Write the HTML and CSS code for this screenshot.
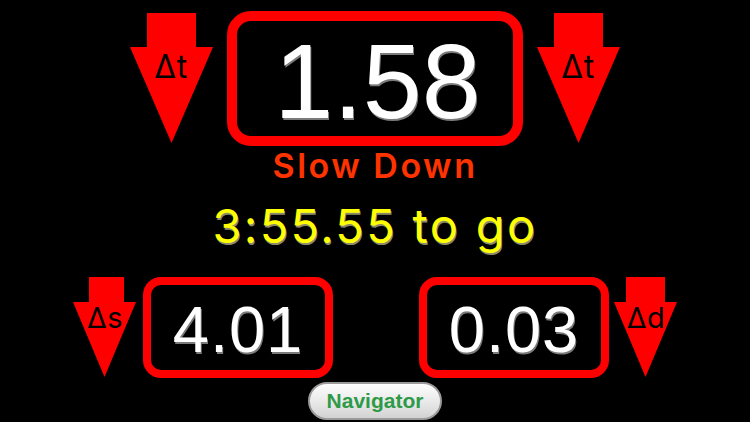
FILE: index.html
```html
<!DOCTYPE html>
<html>
<head>
<meta charset="utf-8">
<link rel="stylesheet" href="styles.css">
</head>
<body>
<div class="screen">
  <div class="top-row">
    <svg class="arrow-big" viewBox="0 0 83 130" width="83" height="130">
      <polygon points="17,0 66,0 66,34 83,34 41.5,130 0,34 17,34" fill="#ff0000"/>
      <text x="41" y="65" class="arrow-label-big">Δt</text>
    </svg>
    <div class="box-big"><span class="num-big">1.58</span></div>
    <svg class="arrow-big" viewBox="0 0 83 130" width="83" height="130">
      <polygon points="17,0 66,0 66,34 83,34 41.5,130 0,34 17,34" fill="#ff0000"/>
      <text x="41" y="65" class="arrow-label-big">Δt</text>
    </svg>
  </div>
  <div class="status">Slow Down</div>
  <div class="togo">3:55.55 to go</div>
  <div class="bottom-row">
    <div class="group group-left">
      <svg class="arrow-small" viewBox="0 0 63 100" width="63" height="100">
        <polygon points="16,0 51,0 51,25 63,25 31.5,100 0,25 16,25" fill="#ff0000"/>
        <text x="32" y="51" class="arrow-label-small">Δs</text>
      </svg>
      <div class="box-small"><span class="num-small">4.01</span></div>
    </div>
    <div class="group group-right">
      <div class="box-small"><span class="num-small">0.03</span></div>
      <svg class="arrow-small" viewBox="0 0 63 100" width="63" height="100">
        <polygon points="12,0 51,0 51,25 63,25 31.5,100 0,25 12,25" fill="#ff0000"/>
        <text x="32" y="51" class="arrow-label-small">Δd</text>
      </svg>
    </div>
  </div>
  <div class="nav-row">
    <div class="nav-btn">Navigator</div>
  </div>
</div>
</body>
</html>
```
FILE: styles.css
```css
html, body {
  margin: 0;
  padding: 0;
  background: #000;
  width: 750px;
  height: 422px;
  overflow: hidden;
}
.screen {
  width: 750px;
  height: 422px;
  display: flex;
  flex-direction: column;
  font-family: "Liberation Sans", Arial, sans-serif;
}
.top-row {
  display: flex;
  justify-content: center;
  align-items: flex-start;
  gap: 14px;
  padding-top: 11px;
}
.arrow-big {
  display: block;
  margin-top: 2px;
}
.arrow-label-big {
  font-family: Inter, "Liberation Sans", sans-serif;
  font-size: 32px;
  letter-spacing: 0.5px;
  text-anchor: middle;
  fill: #000;
}
.arrow-label-small {
  font-family: Inter, "Liberation Sans", sans-serif;
  font-size: 29px;
  letter-spacing: 0.5px;
  text-anchor: middle;
  fill: #000;
}
.box-big {
  box-sizing: border-box;
  width: 296px;
  height: 135px;
  border: 10px solid #ff0000;
  border-radius: 24px;
  display: flex;
  align-items: center;
  justify-content: center;
  padding-top: 5px;
  padding-left: 5px;
}
.num-big {
  color: #fff;
  font-size: 106px;
  line-height: 1;
  text-shadow: 1px 2px 0 #7a7a7a;
}
.status {
  margin-top: 2px;
  text-align: center;
  color: #ff3300;
  font-family: Inter, "Liberation Sans", sans-serif;
  font-weight: 600;
  font-size: 34px;
  line-height: 36px;
  letter-spacing: 2.5px;
}
.togo {
  margin-top: 16px;
  text-align: center;
  color: #ffff00;
  font-family: Inter, "Liberation Sans", sans-serif;
  font-size: 47px;
  line-height: 52px;
  letter-spacing: 2.3px;
  text-shadow: 1px 2px 0 #8a8a6a;
}
.bottom-row {
  margin-top: 25px;
  display: flex;
  justify-content: center;
  gap: 86px;
}
.group {
  display: flex;
  align-items: flex-start;
}
.group-left { gap: 7px; }
.group-right { gap: 5px; }
.arrow-small { display: block; }
.box-small {
  box-sizing: border-box;
  width: 190px;
  height: 101px;
  border: 8px solid #ff0000;
  border-radius: 18px;
  display: flex;
  align-items: center;
  justify-content: center;
  padding-top: 3px;
}
.num-small {
  color: #fff;
  font-size: 65px;
  line-height: 1;
  letter-spacing: 1px;
  text-shadow: 1px 2px 0 #7a7a7a;
}
.nav-row {
  margin-top: 4px;
  display: flex;
  justify-content: center;
}
.nav-btn {
  box-sizing: border-box;
  width: 134px;
  height: 38px;
  border: 2px solid #9a9a9a;
  border-radius: 19px;
  background: linear-gradient(#fdfdfd, #e6e6e6 60%, #d2d2d2);
  color: #2e9a48;
  font-weight: bold;
  font-size: 21px;
  line-height: 34px;
  text-align: center;
}
```
